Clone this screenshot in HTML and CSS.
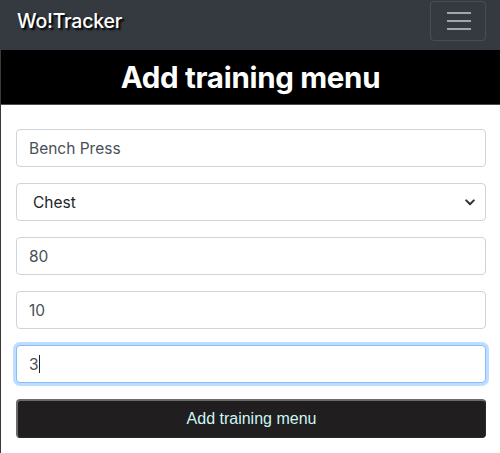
FILE: index.html
```html
<!DOCTYPE html>
<html lang="en">
<head>
<meta charset="utf-8">
<title>Wo!Tracker</title>
<link rel="stylesheet" href="styles.css">
</head>
<body>
<nav class="navbar">
  <span class="brand">Wo!Tracker</span>
  <button class="toggler" type="button" aria-label="Toggle navigation">
    <svg class="toggler-icon" width="30" height="30" viewBox="0 0 30 30"><path d="M4 7h24M4 15h24M4 23h24" stroke="rgba(255,255,255,0.55)" stroke-width="2" fill="none"/></svg>
  </button>
</nav>
<header class="title-bar">
  <h1 class="title">Add training menu</h1>
</header>
<form class="form">
  <div class="group">
    <input class="control" type="text" value="Bench Press">
  </div>
  <div class="group select-wrap">
    <select class="control select">
      <option>Chest</option>
    </select>
    <svg class="chevron" width="10" height="7" viewBox="0 0 10 7"><path d="M1.2 1.4L5 5.2L8.8 1.4" stroke="#333" stroke-width="2" fill="none" stroke-linecap="round" stroke-linejoin="round"/></svg>
  </div>
  <div class="group">
    <input class="control" type="text" value="80">
  </div>
  <div class="group">
    <input class="control" type="text" value="10">
  </div>
  <div class="group focus-wrap">
    <input class="control focused" type="text" value="3">
    <span class="caret"></span>
  </div>
  <button class="submit" type="button">Add training menu</button>
</form>
</body>
</html>
```
FILE: styles.css
```css
html, body {
  margin: 0;
  padding: 0;
  background: #fff;
}
body {
  border-left: 1px solid #3a3a3a;
  min-height: 453px;
  box-sizing: border-box;
  font-family: Inter, "Liberation Sans", sans-serif;
}
.navbar {
  height: 50px;
  box-sizing: border-box;
  background: #343a40;
  display: flex;
  align-items: center;
  justify-content: space-between;
  padding: 1px 14px 9px 16px;
}
.brand {
  color: #fff;
  font-size: 19.5px;
  font-weight: 500;
  letter-spacing: -0.2px;
  text-shadow: 2px 2px 2px #000;
  line-height: 30px;
}
.toggler {
  width: 56px;
  height: 40px;
  box-sizing: border-box;
  background: transparent;
  border: 1px solid rgba(255, 255, 255, 0.1);
  border-radius: 4px;
  display: flex;
  align-items: center;
  justify-content: center;
  padding: 0;
}
.toggler-icon {
  display: block;
}
.title-bar {
  background: #000;
  border-bottom: 1px solid #4a4d52;
  height: 55px;
  box-sizing: border-box;
  display: flex;
  align-items: center;
  justify-content: center;
}
.title {
  margin: 0;
  color: #fff;
  font-size: 29.5px;
  font-weight: 700;
  line-height: 38px;
  letter-spacing: -0.3px;
}
.form {
  padding: 24px 14px 0 15px;
  margin: 0;
}
.group {
  margin-bottom: 16px;
}
.control {
  display: block;
  width: 100%;
  height: 38px;
  box-sizing: border-box;
  padding: 6px 12px;
  font-family: Inter, "Liberation Sans", sans-serif;
  font-size: 15.5px;
  color: #495057;
  background: #fff;
  border: 1px solid #ced4da;
  border-radius: 4px;
  outline: none;
}
.select-wrap, .focus-wrap {
  position: relative;
}
.select {
  appearance: none;
  -webkit-appearance: none;
  padding-left: 16px;
  color: #212529;
}
.chevron {
  position: absolute;
  right: 11px;
  top: 16px;
}
.focused {
  border-color: #80bdff;
  box-shadow: 0 0 0 3px rgba(0, 123, 255, 0.25);
}
.caret {
  position: absolute;
  left: 23px;
  top: 10px;
  width: 1px;
  height: 18px;
  background: #222;
}
.submit {
  display: block;
  width: 100%;
  height: 39px;
  box-sizing: border-box;
  background: #201e1e;
  color: #cdf6f6;
  font-family: "Liberation Sans", Arial, sans-serif;
  font-size: 16px;
  border-style: solid;
  border-width: 2px 1px 1px 2px;
  border-color: #6b6b6b #2a2a2a #2a2a2a #6b6b6b;
  border-radius: 4px;
  padding: 0;
}
```
